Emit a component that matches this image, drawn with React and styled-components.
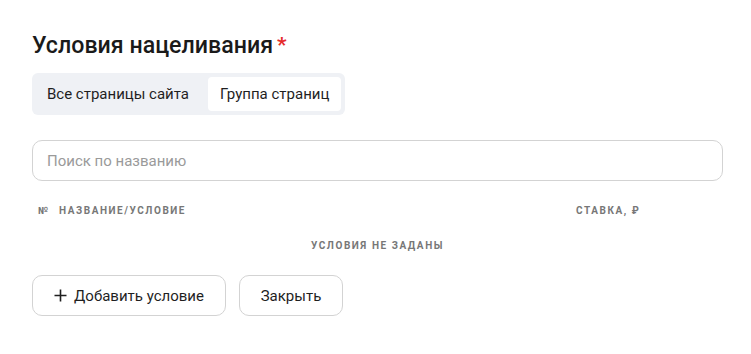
import React from "react";
import styled, { createGlobalStyle } from "styled-components";

const Global = createGlobalStyle`
  html, body { margin: 0; padding: 0; background: #ffffff; }
  body { font-family: Roboto, "Liberation Sans", Arial, sans-serif; color: #1f1f1f; }
  * { box-sizing: border-box; }
`;

const Page = styled.div`
  width: 751px;
  padding: 31px 28px 0 32px;
`;

const Title = styled.h2`
  margin: 0;
  font-size: 23.2px;
  line-height: 29px;
  font-weight: 500;
  color: #1a1a1a;
  display: flex;
  align-items: flex-start;
`;

const Required = styled.span`
  color: #e52b2b;
  font-size: 21px;
  font-weight: 700;
  line-height: 20px;
  margin-left: 4px;
  margin-top: 4px;
`;

const Segmented = styled.div`
  margin-top: 13px;
  display: inline-flex;
  gap: 8px;
  padding: 4px;
  background: #eff1f5;
  border-radius: 6px;
`;

const Segment = styled.button`
  border: none;
  font: inherit;
  font-size: 15px;
  height: 34px;
  padding: 0 ${(p) => (p.$active ? "12px" : "11px")};
  border-radius: 4px;
  background: ${(p) => (p.$active ? "#ffffff" : "transparent")};
  color: #1f1f1f;
  cursor: pointer;
`;

const Search = styled.input`
  display: block;
  margin-top: 25px;
  width: 691px;
  height: 41px;
  padding: 0 14px;
  font: inherit;
  font-size: 15px;
  border: 1px solid #d3d3d3;
  border-radius: 10px;
  outline: none;
  &::placeholder { color: #9a9a9a; }
`;

const Caption = styled.div`
  font-size: 10px;
  font-weight: 700;
  letter-spacing: 1.55px;
  color: #777777;
  text-transform: uppercase;
  line-height: 16px;
`;

const HeaderRow = styled(Caption)`
  margin-top: 22px;
  display: grid;
  grid-template-columns: 21px 1fr 147px;
  padding-left: 6px;
`;

const Empty = styled(Caption)`
  margin-top: 19px;
  text-align: center;
`;

const Actions = styled.div`
  margin-top: 21px;
  display: flex;
  gap: 13px;
`;

const Button = styled.button`
  height: 41px;
  width: ${(p) => p.$w}px;
  border: 1px solid #d3d3d3;
  border-radius: 10px;
  background: #ffffff;
  font: inherit;
  font-size: 15px;
  color: #1f1f1f;
  display: flex;
  align-items: center;
  justify-content: center;
  gap: 7px;
  padding: 0;
  cursor: pointer;
`;

const Plus = () => (
  <svg width="13" height="13" viewBox="0 0 13 13">
    <path d="M6.5 0.5v12M0.5 6.5h12" stroke="#1f1f1f" strokeWidth="1.6" fill="none" />
  </svg>
);

export default function App() {
  return (
    <Page>
      <Global />
      <Title>
        Условия нацеливания<Required>*</Required>
      </Title>
      <Segmented>
        <Segment>Все страницы сайта</Segment>
        <Segment $active>Группа страниц</Segment>
      </Segmented>
      <Search placeholder="Поиск по названию" />
      <HeaderRow>
        <span>№</span>
        <span>Название/условие</span>
        <span>Ставка, ₽</span>
      </HeaderRow>
      <Empty>УСЛОВИЯ НЕ ЗАДАНЫ</Empty>
      <Actions>
        <Button $w={194}>
          <Plus />
          Добавить условие
        </Button>
        <Button $w={104}>Закрыть</Button>
      </Actions>
    </Page>
  );
}
